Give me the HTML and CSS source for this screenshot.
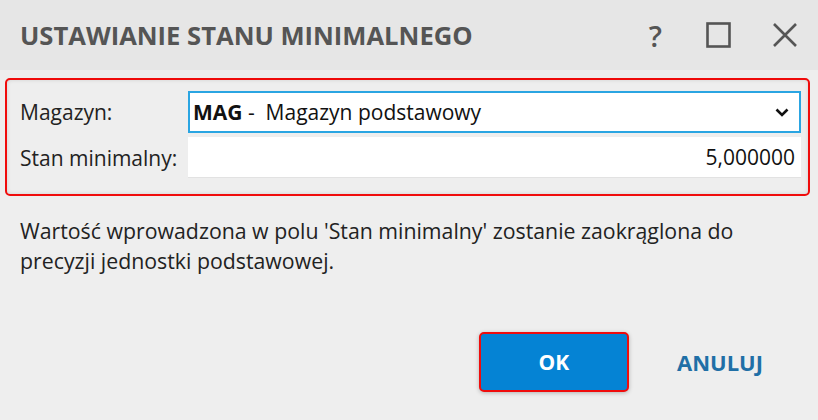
FILE: index.html
```html
<!DOCTYPE html>
<html lang="pl">
<head>
<meta charset="utf-8">
<title>Ustawianie stanu minimalnego</title>
<link rel="stylesheet" href="styles.css">
</head>
<body>
<div class="dialog">
  <header class="titlebar">
    <h1 class="title">USTAWIANIE STANU MINIMALNEGO</h1>
    <div class="tools">
      <span class="tool help">?</span>
      <span class="tool">
        <svg width="26" height="26" viewBox="0 0 26 26"><rect x="1.5" y="1.5" width="22" height="23" fill="none" stroke="#555" stroke-width="2.6"/></svg>
      </span>
      <span class="tool">
        <svg width="26" height="26" viewBox="0 0 26 26"><path d="M2 2 L24 24 M24 2 L2 24" stroke="#555" stroke-width="2.6" fill="none"/></svg>
      </span>
    </div>
  </header>
  <section class="form">
    <label class="label">Magazyn:</label>
    <div class="field select">
      <span class="val"><b>MAG</b>&nbsp;-&nbsp; Magazyn podstawowy</span>
      <svg class="chev" width="14" height="9" viewBox="0 0 14 9"><path d="M1.5 1.5 L7 7 L12.5 1.5" stroke="#111" stroke-width="2.6" fill="none"/></svg>
    </div>
    <label class="label">Stan minimalny:</label>
    <div class="field number">5,000000</div>
  </section>
  <p class="note">Wartość wprowadzona w polu 'Stan minimalny' zostanie zaokrąglona do precyzji jednostki podstawowej.</p>
  <footer class="actions">
    <button class="btn ok">OK</button>
    <button class="btn cancel">ANULUJ</button>
  </footer>
</div>
</body>
</html>
```

FILE: styles.css
```css
html, body {
  margin: 0;
  padding: 0;
}
body {
  background: #eeeeee;
  font-family: "Open Sans", "Noto Sans", sans-serif;
  color: #222;
  width: 818px;
  height: 420px;
  overflow: hidden;
}
.dialog {
  height: 420px;
  display: flex;
  flex-direction: column;
}
.titlebar {
  height: 70px;
  background: #e6e6e6;
  display: flex;
  align-items: center;
  justify-content: space-between;
  padding: 0 20px 0 20px;
  box-sizing: border-box;
}
.title {
  margin: 0;
  font-family: "Liberation Sans Narrow", "Open Sans", sans-serif;
  font-weight: bold;
  font-size: 25.6px;
  color: #555;
}
.tools {
  display: flex;
  align-items: center;
  gap: 40px;
}
.tool {
  display: flex;
  align-items: center;
  color: #555;
}
.help {
  font-family: "Open Sans", sans-serif;
  font-size: 29px;
  font-weight: 600;
  margin-right: 4px;
}
.form {
  margin: 8px 8px 0 5px;
  border: 2px solid #f00c0c;
  border-radius: 5px;
  padding: 11px 7px 16px 13px;
  display: grid;
  grid-template-columns: 168px 1fr;
  row-gap: 4px;
  align-items: center;
  box-shadow: inset 0 0 4px rgba(0,0,0,0.12);
}
.label {
  font-size: 21px;
  color: #222;
}
.field {
  background: #fff;
  height: 42px;
  box-sizing: border-box;
  display: flex;
  align-items: center;
  font-size: 21px;
  color: #111;
}
.select {
  border: 2px solid #2aa5e2;
  padding: 0 10px 0 3px;
  justify-content: space-between;
}
.select b {
  font-weight: 700;
}
.number {
  height: 41px;
  justify-content: flex-end;
  padding-right: 6px;
  border-bottom: 1px solid #e2e2e2;
}
.note {
  margin: 20px 0 0 20px;
  width: 750px;
  font-size: 21.3px;
  line-height: 30px;
  color: #222;
}
.actions {
  margin-top: auto;
  display: flex;
  justify-content: flex-end;
  align-items: center;
  gap: 30px;
  padding: 0 37px 28px 0;
}
.btn {
  font-family: "Open Sans", sans-serif;
  font-weight: 700;
  font-size: 21px;
  border: none;
  background: none;
}
.ok {
  width: 150px;
  height: 60px;
  background: #0583d4;
  color: #fff;
  border: 2px solid #f00c0c;
  border-radius: 5px;
  box-shadow: 0 1px 4px rgba(0,0,0,0.25);
}
.cancel {
  color: #1f6fa6;
  font-size: 22px;
  padding: 0 18px;
  height: 60px;
}
```
